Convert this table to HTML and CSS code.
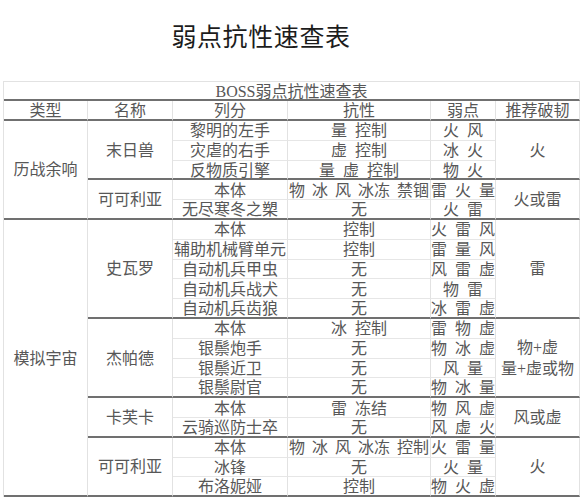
FILE: index.html
```html
<!DOCTYPE html>
<html lang="zh">
<head>
<meta charset="utf-8">
<title>弱点抗性速查表</title>
<link rel="stylesheet" href="styles.css">
</head>
<body>
<h1 class="title">弱点抗性速查表</h1>
<div class="tbl">
  <div class="c all thick">BOSS弱点抗性速查表</div>

  <div class="c thick">类型</div>
  <div class="c thick">名称</div>
  <div class="c thick">列分</div>
  <div class="c thick">抗性</div>
  <div class="c thick">弱点</div>
  <div class="c thick">推荐破韧</div>

  <div class="c r5 thick">历战余响</div>
  <div class="c r3 thick">末日兽</div>
  <div class="c">黎明的左手</div>
  <div class="c">量 控制</div>
  <div class="c">火 风</div>
  <div class="c r3 thick">火</div>
  <div class="c">灾虐的右手</div>
  <div class="c">虚 控制</div>
  <div class="c">冰 火</div>
  <div class="c thick">反物质引擎</div>
  <div class="c thick">量 虚 控制</div>
  <div class="c thick">物 火</div>

  <div class="c r2 thick">可可利亚</div>
  <div class="c">本体</div>
  <div class="c tight">物 冰 风 冰冻 禁锢</div>
  <div class="c">雷 火 量</div>
  <div class="c r2 thick">火或雷</div>
  <div class="c thick">无尽寒冬之槊</div>
  <div class="c thick">无</div>
  <div class="c thick">火 雷</div>

  <div class="c r14 thick">模拟宇宙</div>
  <div class="c r5 thick">史瓦罗</div>
  <div class="c">本体</div>
  <div class="c">控制</div>
  <div class="c">火 雷 风</div>
  <div class="c r5 thick">雷</div>
  <div class="c">辅助机械臂单元</div>
  <div class="c">控制</div>
  <div class="c">雷 量 风</div>
  <div class="c">自动机兵甲虫</div>
  <div class="c">无</div>
  <div class="c">风 雷 虚</div>
  <div class="c">自动机兵战犬</div>
  <div class="c">无</div>
  <div class="c">物 雷</div>
  <div class="c thick">自动机兵齿狼</div>
  <div class="c thick">无</div>
  <div class="c thick">冰 雷 虚</div>

  <div class="c r4 thick">杰帕德</div>
  <div class="c">本体</div>
  <div class="c">冰 控制</div>
  <div class="c">雷 物 虚</div>
  <div class="c r4 thick col">
    <span>物+虚</span>
    <span>量+虚或物</span>
  </div>
  <div class="c">银鬃炮手</div>
  <div class="c">无</div>
  <div class="c">物 冰 虚</div>
  <div class="c">银鬃近卫</div>
  <div class="c">无</div>
  <div class="c">风 量</div>
  <div class="c thick">银鬃尉官</div>
  <div class="c thick">无</div>
  <div class="c thick">物 冰 量</div>

  <div class="c r2 thick">卡芙卡</div>
  <div class="c">本体</div>
  <div class="c">雷 冻结</div>
  <div class="c">物 风 虚</div>
  <div class="c r2 thick">风或虚</div>
  <div class="c thick">云骑巡防士卒</div>
  <div class="c thick">无</div>
  <div class="c thick">风 虚 火</div>

  <div class="c r3 thick">可可利亚</div>
  <div class="c">本体</div>
  <div class="c tight">物 冰 风 冰冻 控制</div>
  <div class="c">火 雷 量</div>
  <div class="c r3 thick">火</div>
  <div class="c">冰锋</div>
  <div class="c">无</div>
  <div class="c">火 量</div>
  <div class="c thick">布洛妮娅</div>
  <div class="c thick">控制</div>
  <div class="c thick">物 火 虚</div>
</div>
</body>
</html>
```

FILE: styles.css
```css
* {
  box-sizing: border-box;
}

html, body {
  margin: 0;
  padding: 0;
  background: #ffffff;
}

.title {
  margin: 0;
  height: 81px;
  padding: 0 62px 11px 0;
  display: flex;
  align-items: center;
  justify-content: center;
  font-family: "Noto Sans CJK SC", "Noto Sans", sans-serif;
  font-size: 25px;
  font-weight: 400;
  letter-spacing: 0.6px;
  color: #1c1c1c;
}

.tbl {
  margin-left: 3px;
  width: 577px;
  display: grid;
  grid-template-columns: 84px 85px 115px 143px 65px 84px;
  grid-template-rows: 19px 20px repeat(19, 19.8px);
  border-top: 1px solid #e2e2e2;
  border-left: 1px solid #e2e2e2;
  font-family: "Liberation Serif", "Noto Sans CJK SC", serif;
  font-size: 16px;
  line-height: 1;
  color: #575757;
}

.c {
  display: flex;
  align-items: center;
  justify-content: center;
  padding-top: 2px;
  white-space: pre;
  word-spacing: 4px;
  border-right: 1px solid #e2e2e2;
  border-bottom: 1px solid #e6e6e6;
  min-width: 0;
}

.tight {
  word-spacing: 3px;
}

.thick {
  border-bottom: 2px solid #707070;
}

.all {
  grid-column: span 6;
}

.r2 { grid-row: span 2; }
.r3 { grid-row: span 3; }
.r4 { grid-row: span 4; }
.r5 { grid-row: span 5; }
.r14 { grid-row: span 14; }

.col {
  flex-direction: column;
  gap: 5px;
}
```
